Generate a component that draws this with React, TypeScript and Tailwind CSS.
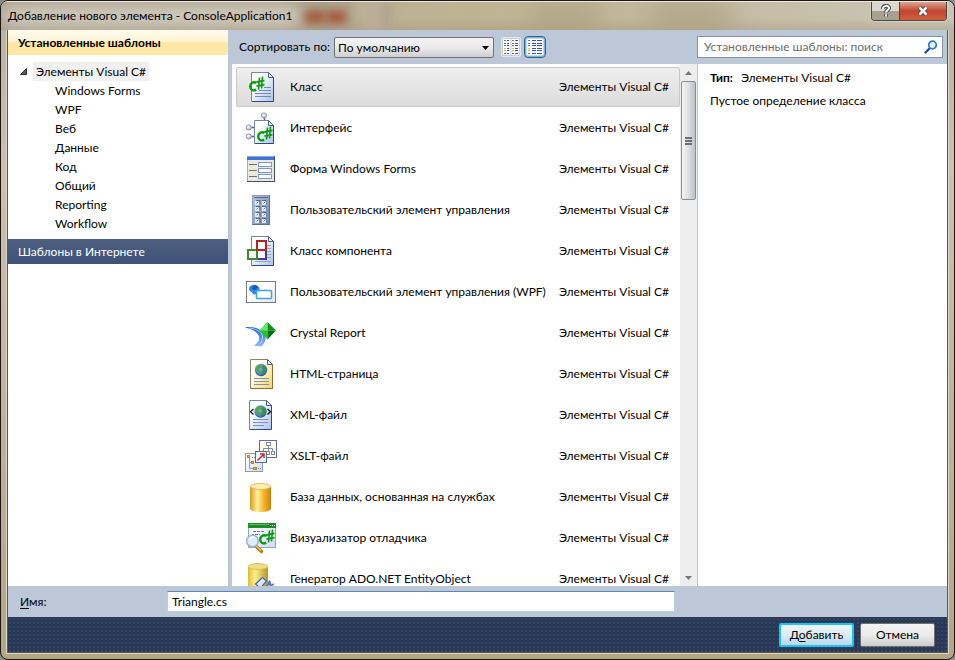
import React from 'react';

interface TemplateItem {
    name: string;
    icon: React.ReactNode;
}

const CATEGORIES = ['Windows Forms', 'WPF', 'Веб', 'Данные', 'Код', 'Общий', 'Reporting', 'Workflow'];

const GROUP_NAME = 'Элементы Visual C#';

const Icon: React.FC<{ children: React.ReactNode }> = ({ children }) => (
    <svg viewBox="0 0 32 32" className="h-8 w-8 shrink-0" aria-hidden="true">
        {children}
    </svg>
);

const Page: React.FC<{ x: number; y: number; w: number; h: number; fill?: string; stroke?: string; shade?: string }> = ({
    x,
    y,
    w,
    h,
    fill = 'url(#paper)',
    stroke = '#6f86ab',
    shade = '#304a7c',
}) => (
    <g>
        <path d={`M${x + 0.5} ${y + 0.5}h${w - 6}l5 5v${h - 6}h-${w - 1}z`} fill={fill} stroke={stroke} />
        <path d={`M${x + w - 5.5} ${y + 0.5}v5h5z`} fill="#dfe9f8" stroke="#4c5f7d" />
        <path d={`M${x + 1} ${y + h - 0.5}h${w - 1.5}v-${h - 6}`} fill="none" stroke={shade} />
    </g>
);

const Sharp: React.FC<{ x: number; y: number }> = ({ x, y }) => (
    <g fill="none" stroke="#0c9a0c">
        <path d={`M${x + 7.5} ${y + 2}c-3-2-6.3.3-6.300 3.600s3 4.700 6 3`} strokeWidth="2.4" />
        <path d={`M${x + 9.5} ${y + 8.5}l1-12M${x + 12.5} ${y + 7.5}l1-12`} strokeWidth="1.6" />
        <path d={`M${x + 7.5} ${y + 1}l8-1.6M${x + 7.5} ${y + 5.2}l8-1.6`} strokeWidth="1.8" />
    </g>
);

const Globe: React.FC<{ cx: number; cy: number }> = ({ cx, cy }) => (
    <g>
        <circle cx={cx} cy={cy} r="6.2" fill="url(#ocean)" />
        <path d={`M${cx - 4} ${cy - 4}l3-1.6 2 .8-.6 2.4-2.2 1.4.4 2 2 .8-1 3.4-1.6-.6-1-3-2.6-2z`} fill="#52a746" />
        <path d={`M${cx + 2} ${cy - 4.6}l2.4 1.4 1.2 3.2-1.4 3-2 1-.8-3 .8-1.6-1.6-1.4z`} fill="#3f9340" />
    </g>
);

const IconDefs: React.FC = () => (
    <svg className="absolute h-0 w-0" aria-hidden="true">
        <defs>
            <linearGradient id="paper" x1="0" y1="0" x2="1" y2="1">
                <stop offset="0.3" stopColor="#fdfeff" />
                <stop offset="1" stopColor="#a9c3ee" />
            </linearGradient>
            <linearGradient id="paperYellow" x1="0" y1="0" x2="1" y2="1">
                <stop offset="0.3" stopColor="#fffef4" />
                <stop offset="1" stopColor="#f6d668" />
            </linearGradient>
            <linearGradient id="steel" x1="0" y1="0" x2="1" y2="1">
                <stop offset="0" stopColor="#b5c4dc" />
                <stop offset="1" stopColor="#7288ad" />
            </linearGradient>
            <linearGradient id="gold" x1="0" x2="1">
                <stop offset="0" stopColor="#d99a1c" />
                <stop offset="0.35" stopColor="#fff0a0" />
                <stop offset="0.65" stopColor="#f7b52c" />
                <stop offset="1" stopColor="#c9820d" />
            </linearGradient>
            <linearGradient id="brass" x1="0" x2="1">
                <stop offset="0" stopColor="#d9bd36" />
                <stop offset="0.35" stopColor="#fff08c" />
                <stop offset="1" stopColor="#b89425" />
            </linearGradient>
            <linearGradient id="swoosh" x1="0" y1="0" x2="0" y2="1">
                <stop offset="0" stopColor="#1d5ecb" />
                <stop offset="1" stopColor="#8cbcff" />
            </linearGradient>
            <radialGradient id="ocean" cx="0.35" cy="0.3" r="0.8">
                <stop offset="0" stopColor="#8fc2ff" />
                <stop offset="1" stopColor="#184a9c" />
            </radialGradient>
            <radialGradient id="ball" cx="0.4" cy="0.35" r="0.7">
                <stop offset="0" stopColor="#ffffff" />
                <stop offset="1" stopColor="#9fb0c8" />
            </radialGradient>
            <linearGradient id="window" x1="0" y1="0" x2="1" y2="1">
                <stop offset="0.2" stopColor="#ffffff" />
                <stop offset="1" stopColor="#c9d9f2" />
            </linearGradient>
            <linearGradient id="pane" x1="0" y1="0" x2="1" y2="1">
                <stop offset="0.4" stopColor="#ffffff" />
                <stop offset="1" stopColor="#e2e4e8" />
            </linearGradient>
        </defs>
    </svg>
);

const TEMPLATES: TemplateItem[] = [
    {
        name: 'Класс',
        icon: (
            <Icon>
                <Page x={6} y={1} w={23} h={30} />
                <path d="M19 16.5h7M14 19.5h12M10 22.5h16M10 25.5h16" stroke="#7288ad" />
                <Sharp x={4} y={10} />
            </Icon>
        ),
    },
    {
        name: 'Интерфейс',
        icon: (
            <Icon>
                <path d="M19.5 5v4M6 15.5h4M6 24.5h4" stroke="#54657f" strokeWidth="1.5" />
                <Page x={9} y={8} w={20} h={24} />
                <circle cx="19" cy="3.5" r="2.6" fill="url(#ball)" stroke="#8b9ab3" />
                <circle cx="3.8" cy="15.5" r="2.6" fill="url(#ball)" stroke="#8b9ab3" />
                <circle cx="3.8" cy="24.5" r="2.6" fill="url(#ball)" stroke="#8b9ab3" />
                <Sharp x={12} y={19} />
            </Icon>
        ),
    },
    {
        name: 'Форма Windows Forms',
        icon: (
            <Icon>
                <rect x="2.5" y="3.5" width="27" height="25" fill="#ece9d8" stroke="#a3abbb" />
                <rect x="2" y="3" width="28" height="4" fill="#3f74d8" />
                <path d="M2 3.5h27" stroke="#84a9ee" />
                <path d="M29.5 4v25M2 28.5h28" stroke="#3c4d6d" />
                <path d="M4 11.5h8M4 17.5h8M4 23.5h8" stroke="#66718a" />
                <g fill="#ffffff" stroke="#7898d2">
                    <rect x="13.5" y="9.5" width="13" height="4" />
                    <rect x="13.5" y="15.5" width="13" height="4" />
                    <rect x="13.5" y="21.5" width="13" height="4" />
                </g>
            </Icon>
        ),
    },
    {
        name: 'Пользовательский элемент управления',
        icon: (
            <Icon>
                <rect x="7.5" y="1.5" width="17" height="29" fill="url(#steel)" stroke="#8a9dbc" />
                <path d="M24.5 1v30M7 30.5h18" stroke="#5a6f92" />
                <path d="M9 3.5h14" stroke="#4d648b" />
                {[6, 12, 18, 24].map((y) => (
                    <g key={y}>
                        <path d={`M11 ${y + 0.5}h4v4M17 ${y + 0.5}h4v4`} fill="none" stroke="#566a8c" />
                        <rect x="10" y={y + 1} width="4" height="4" fill="#e6edf7" />
                        <rect x="17" y={y + 1} width="4" height="4" fill="#e6edf7" />
                        <path d={`M11.500 ${y + 3.5}l2-2M18.500 ${y + 3.5}l2-2`} stroke="#6a7d9d" />
                    </g>
                ))}
            </Icon>
        ),
    },
    {
        name: 'Класс компонента',
        icon: (
            <Icon>
                <Page x={6} y={1} w={23} h={30} />
                <path d="M22 10.5h4M22 13.5h4M22 16.5h4M22 19.5h4M22 22.5h4M10 26.5h16" stroke="#92a5c8" />
                <rect x="12" y="15" width="9" height="9" fill="#ffffff" stroke="#45388f" strokeWidth="2" />
                <rect x="3" y="15" width="9" height="9" fill="#ffffff" stroke="#3c8a28" strokeWidth="2" />
                <rect x="12" y="6" width="9" height="9" fill="#ffffff" stroke="#b92222" strokeWidth="2" />
            </Icon>
        ),
    },
    {
        name: 'Пользовательский элемент управления (WPF)',
        icon: (
            <Icon>
                <rect x="1.5" y="5.5" width="29" height="21" fill="url(#pane)" stroke="#777c86" />
                <path d="M4 12c1-3 5-4 8-2.500 3 1.500 3.500 5 1 7.500-3 2.500-6 1.500-6-1-2-.500-3.500-2-3-4z" fill="#2f8ae0" />
                <path d="M8 10c2-1 4-.500 5 1l-3 3-3-1z" fill="#1555b4" />
                <rect x="11.5" y="14.5" width="15" height="8" rx="1" fill="#ffffff" stroke="#35a8d8" strokeWidth="1.500" />
            </Icon>
        ),
    },
    {
        name: 'Crystal Report',
        icon: (
            <Icon>
                <path d="M0 10.500c7-1.500 19 1 20.500 10 .4 3-1.500 6.500-4 8.800-2.600.4-5.500-.1-7.500-.8 5-3 6.500-7 4-11C10.500 13 5 12 0 10.500z" fill="url(#swoosh)" />
                <path d="M4 11c6 .5 12 3 13.500 8 .5 3-1 6-3 8.500" fill="none" stroke="#b9d6ff" />
                <path d="M22.500 5v17.500l-8-9z" fill="#25c42d" />
                <path d="M22.500 5l8.500 8.500h-8.500z" fill="#12901b" />
                <path d="M22.500 22.500l8.500-9h-8.500z" fill="#067010" />
                <path d="M22.500 5l-8 8.500h8z" fill="#6ee468" />
            </Icon>
        ),
    },
    {
        name: 'HTML-страница',
        icon: (
            <Icon>
                <Page x={5} y={1} w={23} h={30} fill="url(#paperYellow)" stroke="#8b8468" shade="#8a6d20" />
                <Globe cx={16} cy={12} />
                <path d="M9 20.500h15M9 23.500h15M9 26.500h15" stroke="#8792a8" />
            </Icon>
        ),
    },
    {
        name: 'XML-файл',
        icon: (
            <Icon>
                <Page x={4} y={1} w={23} h={30} />
                <Globe cx={15.5} cy={12.5} />
                <path d="M8.500 10l-3 2.700 3 2.700M22.500 10l3 2.700-3 2.700" fill="none" stroke="#111111" strokeWidth="1.300" />
                <path d="M8 20.500h15M8 23.500h15M8 26.500h11" stroke="#7f90b0" />
            </Icon>
        ),
    },
    {
        name: 'XSLT-файл',
        icon: (
            <Icon>
                <rect x="14.500" y="0.500" width="17" height="17" fill="#fffbe6" stroke="#5f7192" />
                <path d="M23.500 5v3M18.500 11v-2.500h9V11M23.500 8v3" fill="none" stroke="#7d8ba4" />
                <g fill="#ffffff" stroke="#7d8ba4">
                    <rect x="21.500" y="2.500" width="4" height="3" />
                    <rect x="16.500" y="11.500" width="3" height="3" />
                    <rect x="21.500" y="11.500" width="3" height="3" />
                    <rect x="26.500" y="11.500" width="3" height="3" />
                </g>
                <rect x="0.500" y="13.500" width="17" height="18" fill="url(#window)" stroke="#8f9bb2" />
                <path d="M4.500 18v10.500H8M4.500 22.500H8" fill="none" stroke="#8f9bb2" />
                <path d="M7 17.500h4M12 22.500h3M13 28.500h3" stroke="#7d8ba4" strokeDasharray="1 1" />
                <g fill="#f0b428" stroke="#b98416">
                    <rect x="2.500" y="15.500" width="2" height="2" />
                    <rect x="6.500" y="21.500" width="2" height="2" />
                    <rect x="8.500" y="27.500" width="3" height="2" />
                </g>
                <rect x="10.500" y="11.500" width="11" height="11" fill="#eef4ff" stroke="#56688a" />
                <path d="M12.500 20.500l6-6M15 14h4v4" fill="none" stroke="#c0302a" strokeWidth="1.500" />
            </Icon>
        ),
    },
    {
        name: 'База данных, основанная на службах',
        icon: (
            <Icon>
                <path d="M5 5.500v22c0 2 4.500 3.500 10.500 3.500S26 29.500 26 27.500v-22z" fill="url(#gold)" />
                <ellipse cx="15.500" cy="5.500" rx="10.200" ry="3" fill="#ffefb0" stroke="#e0ab3c" strokeWidth="0.800" />
            </Icon>
        ),
    },
    {
        name: 'Визуализатор отладчика',
        icon: (
            <Icon>
                <rect x="3.500" y="1.500" width="27" height="24" fill="url(#window)" stroke="#8ea6cc" />
                <rect x="3" y="1" width="28" height="5" fill="#1f8a28" />
                <path d="M4 2.500h20" stroke="#5cbd5c" />
                <path d="M25 3.500h1M27 3.500h1M29 3.500h1" stroke="#ffffff" />
                <path d="M8 9.500h11M7 12.500h2M10 12.500h5" stroke="#4f7cc4" strokeDasharray="3 1" />
                <Sharp x={14} y={12} />
                <path d="M11 24l5.500 5.500" stroke="#b97716" strokeWidth="3.400" strokeLinecap="round" />
                <path d="M11 23.500l5 5" stroke="#f5c55a" strokeWidth="1.200" />
                <circle cx="7.500" cy="19" r="5.800" fill="#dcecfb" fillOpacity="0.950" stroke="#a3b3ca" strokeWidth="1.500" />
                <path d="M4.500 17.500c1-2 3-2.500 4.500-2" fill="none" stroke="#ffffff" strokeWidth="1.500" />
            </Icon>
        ),
    },
    {
        name: 'Генератор ADO.NET EntityObject',
        icon: (
            <Icon>
                <path d="M3 4v24c0 2 4 4 10 4s10-2 10-4V4z" fill="url(#brass)" />
                <ellipse cx="13" cy="3.500" rx="9.800" ry="3" fill="#eddf83" stroke="#d3b94e" strokeWidth="0.800" />
                <path d="M10.500 21l7-6.500 4 3.500-6 7z" fill="#dbe9fd" stroke="#4565a7" strokeWidth="1.200" />
                <path d="M20 24l6-4.500M25 17.500l-1.500 3 2.500 2 3-1.500" fill="none" stroke="#5a78b4" strokeWidth="1.800" />
            </Icon>
        ),
    },
];

const MARK_COLORS = ['#4f9a50', '#e03c31', '#3d6ae0', '#d8c92c', '#8ac43c', '#e03c31'];

const ViewIcon: React.FC<{ medium?: boolean }> = ({ medium }) => (
    <svg viewBox="0 0 16 16" className="h-4 w-4" aria-hidden="true">
        <rect width="16" height="16" fill="#ffffff" />
        {!medium && <path d="M8 0v16" stroke="#c3cddd" strokeWidth="1" />}
        {MARK_COLORS.map((color, i) => (
            <g key={color + i} shapeRendering="crispEdges">
                <rect x="1" y={1 + i * 2.5} width="2" height="1" fill={color} />
                {medium ? (
                    <>
                        <rect x="5" y={1 + i * 2.5} width="4" height="1" fill="#3a50c4" />
                        <rect x="10" y={1 + i * 2.5} width="5" height="1" fill="#3a50c4" />
                    </>
                ) : (
                    <>
                        <rect x="4" y={1 + i * 2.5} width="2" height="1" fill="#3a50c4" />
                        <rect x="9" y={1 + i * 2.5} width="2" height="1" fill={color} />
                        <rect x="12" y={1 + i * 2.5} width="3" height="1" fill="#3a50c4" />
                    </>
                )}
            </g>
        ))}
    </svg>
);

const TitleBar: React.FC = () => (
    <header className="relative flex h-[29px] shrink-0 items-start justify-between overflow-hidden rounded-t-md border-t border-[#efe9e2] bg-linear-to-r from-[#b3a999] from-0% via-[#beb391] via-50% to-[#cbc5b5] pl-[7px] pr-[7px]">
        {/* blurred desktop behind the glass */}
        <div className="absolute inset-x-0 bottom-0 h-3 bg-linear-to-b from-transparent to-[#a0977c]/40" />
        <div className="absolute -left-2 -top-2 h-9 w-[360px] bg-[#a69b88]/70 blur-xs" />
        <div className="absolute left-[364px] top-0 h-full w-7 bg-[#bbae98] blur-xs" />
        <div className="absolute left-[384px] top-0 h-full w-1 bg-[#948b74]/60 blur-xs" />
        <div className="absolute left-[530px] top-1 h-5 w-[70px] bg-[#a09370]/60 blur-md" />
        <div className="absolute left-[650px] top-1 h-5 w-[80px] bg-[#a09370]/70 blur-md" />
        <div className="absolute left-0 top-1 h-5 w-[300px] rounded-full bg-[#e4e1d9]/70 blur-sm" />
        <div className="absolute left-[304px] top-[9px] h-3 w-5 bg-[#a4583a] blur-xs" />
        <div className="absolute left-[325px] top-[9px] h-3 w-5 bg-[#a4583a] blur-xs" />
        <h1 className="relative pt-1 text-[12px] leading-5 text-black">Добавление нового элемента - ConsoleApplication1</h1>
        <div className="relative flex h-[19px] overflow-hidden rounded-b border border-t-0 border-[#4c463e] shadow-[0_0_0_1px_#d8d2c4]">
            <button type="button" aria-label="Справка" className="flex w-7 items-center justify-center border-r border-[#4c463e] bg-linear-to-b from-[#dcd8ce] from-50% to-[#a8a190] to-50%">
                <svg viewBox="0 0 12 14" className="h-[14px] w-3" aria-hidden="true">
                    <path d="M3 5c0-4 6-4 6-1 0 2-3 2-3 4.500M6 10.500v2" fill="none" stroke="#44444f" strokeWidth="4" />
                    <path d="M3 5c0-4 6-4 6-1 0 2-3 2-3 4.500M6 10.500v2" fill="none" stroke="#ffffff" strokeWidth="2" />
                </svg>
            </button>
            <button type="button" aria-label="Закрыть" className="flex w-[46px] items-center justify-center bg-linear-to-b from-[#dca493] via-[#c0452c] via-50% to-[#d0603f]">
                <svg viewBox="0 0 14 12" className="h-3 w-[14px]" aria-hidden="true">
                    <path d="M3.500 2.500l7 7M10.500 2.500l-7 7" stroke="#4a3a40" strokeWidth="4.500" />
                    <path d="M3.500 2.500l7 7M10.500 2.500l-7 7" stroke="#ffffff" strokeWidth="2.600" />
                </svg>
            </button>
        </div>
    </header>
);

const Sidebar: React.FC = () => (
    <aside className="w-[220px] shrink-0 bg-white">
        <h2 className="h-[25px] bg-linear-to-b from-[#fffbef] from-0% via-[#fff3d0] via-50% to-[#ffe8a6] to-50% pl-[10px] text-[12px] font-bold leading-[25px]">
            Установленные шаблоны
        </h2>
        <nav className="pb-[6px] pt-[7px] text-[12px] leading-[19px]">
            <div className="flex items-center pl-3">
                <svg viewBox="0 0 7 7" className="mr-[6px] h-[7px] w-[7px]" aria-hidden="true">
                    <path d="M6.500 0.500v6h-6z" fill="#595959" stroke="#262626" />
                </svg>
                <a href="#csharp" className="bg-[#f0f0f0] px-[3px]">{GROUP_NAME}</a>
            </div>
            <ul className="pl-[47px]">
                {CATEGORIES.map((category) => (
                    <li key={category}>
                        <a href="#category">{category}</a>
                    </li>
                ))}
            </ul>
        </nav>
        <h2 className="h-[25px] bg-linear-to-b from-[#4d6082] to-[#3d5277] pl-[10px] text-[12px] leading-[25px] text-white">
            Шаблоны в Интернете
        </h2>
    </aside>
);

const Toolbar: React.FC = () => (
    <div className="flex h-[34px] shrink-0 items-center pl-[7px] pr-1">
        <label htmlFor="sort" className="w-[95px] whitespace-nowrap">Сортировать по:</label>
        <div className="relative">
            <select
                id="sort"
                className="h-[21px] w-[160px] appearance-none rounded-xs border border-[#707070] bg-linear-to-b from-[#f2f2f2] via-[#ebebeb] via-50% to-[#cfcfcf] pl-[3px] text-[12px] leading-[19px] text-black"
            >
                <option>По умолчанию</option>
            </select>
            <svg viewBox="0 0 7 4" className="pointer-events-none absolute right-[5px] top-[9px] h-1 w-[7px]" aria-hidden="true">
                <path d="M0 0h7l-3.500 4z" fill="#000000" />
            </svg>
        </div>
        <button type="button" aria-label="Мелкие значки" className="ml-[7px] flex h-5 w-5 items-center justify-center rounded-xs border border-[#e3e8f0] bg-[#c3cddd]">
            <ViewIcon />
        </button>
        <button type="button" aria-label="Средние значки" className="ml-[3px] flex h-[22px] w-[22px] items-center justify-center rounded-sm border border-[#2c628b] bg-[#b5dff3] shadow-[inset_0_0_0_1px_#7fb4d4]">
            <ViewIcon medium />
        </button>
        <div className="ml-auto flex h-[22px] w-[246px] items-center border border-[#8593a8] bg-white pl-[6px] pr-1">
            <input
                type="text"
                aria-label="Поиск"
                placeholder="Установленные шаблоны: поиск"
                className="min-w-0 flex-1 text-[12px] outline-none placeholder:text-[#6d6d6d]"
            />
            <svg viewBox="0 0 14 14" className="h-[14px] w-[14px]" aria-hidden="true">
                <path d="M1.500 12.500l4.500-4.500" stroke="#1f4a9c" strokeWidth="2.400" strokeLinecap="round" />
                <circle cx="8.500" cy="5" r="3.800" fill="#eaf4ff" stroke="#2f7cd0" strokeWidth="1.800" />
            </svg>
        </div>
    </div>
);

const TemplateList: React.FC = () => (
    <ul className="flex min-w-0 flex-1 flex-col gap-px overflow-hidden pl-1 pt-[3px]">
        {TEMPLATES.map(({ name, icon }, index) => (
            <li key={name} className="shrink-0">
                <button
                    type="button"
                    className={`flex h-10 w-full items-center rounded-xs border pl-2 pr-[10px] text-left ${
                        index === 0 ? 'border-[#c9c9c9] bg-linear-to-b from-[#efefef] to-[#dcdcdc]' : 'border-transparent'
                    }`}
                >
                    {icon}
                    <span className="ml-[13px] min-w-0 flex-1 whitespace-nowrap">{name}</span>
                    <span className="whitespace-nowrap">{GROUP_NAME}</span>
                </button>
            </li>
        ))}
    </ul>
);

const ScrollBar: React.FC = () => (
    <div className="flex w-[17px] shrink-0 flex-col items-center bg-[#ededed]">
        <button type="button" aria-label="Вверх" className="flex h-[17px] w-full shrink-0 items-center justify-center">
            <svg viewBox="0 0 7 4" className="h-1 w-[7px]" aria-hidden="true">
                <path d="M0 4h7L3.500 0z" fill="#777777" />
            </svg>
        </button>
        <div className="flex h-[119px] w-[15px] items-center justify-center rounded-xs border border-[#8d8d8d] bg-linear-to-r from-[#f5f5f5] via-[#dedfe0] via-50% to-[#bfc1c4]">
            <div className="flex w-[7px] flex-col gap-px">
                <div className="h-[2px] bg-[#6f6f6f]" />
                <div className="h-[2px] bg-[#6f6f6f]" />
                <div className="h-[2px] bg-[#6f6f6f]" />
            </div>
        </div>
        <button type="button" aria-label="Вниз" className="mt-auto flex h-[17px] w-full shrink-0 items-center justify-center">
            <svg viewBox="0 0 7 4" className="h-1 w-[7px]" aria-hidden="true">
                <path d="M0 0h7L3.500 4z" fill="#777777" />
            </svg>
        </button>
    </div>
);

const Details: React.FC = () => (
    <section className="w-[250px] shrink-0 border-l border-[#bcc7d8] bg-white pl-3 pt-1 leading-[18px]">
        <p className="pt-px">
            <strong className="mr-2">Тип:</strong>
            {GROUP_NAME}
        </p>
        <p className="mt-[5px]">Пустое определение класса</p>
    </section>
);

const NameRow: React.FC = () => (
    <div className="flex h-[31px] shrink-0 items-center bg-[#bcc7d8] pl-3">
        <label htmlFor="name" className="w-[147px]">
            <span className="underline underline-offset-2">И</span>мя:
        </label>
        <input
            id="name"
            type="text"
            defaultValue="Triangle.cs"
            className="mr-[272px] h-[21px] min-w-0 flex-1 border border-[#b5cfe7] border-t-[#5b87b0] bg-white px-1 text-[12px] outline-none"
        />
    </div>
);

const Footer: React.FC = () => (
    <footer className="flex h-[35px] shrink-0 items-center justify-end gap-[6px] bg-[#293955] bg-[radial-gradient(#324666_1px,transparent_1px)] bg-[size:4px_4px] pr-3">
        <button type="button" className="h-6 w-[75px] rounded-xs border-2 border-[#1cc2f2] bg-linear-to-b from-[#eef6fb] via-[#dbebf4] via-50% to-[#b8d8ea]">
            Д<span className="underline underline-offset-2">о</span>бавить
        </button>
        <button type="button" className="h-6 w-[75px] rounded-xs border border-[#707070] bg-linear-to-b from-[#f3f3f3] via-[#ebebeb] via-50% to-[#cecece]">
            Отмена
        </button>
    </footer>
);

export default function App() {
    return (
        <div className="h-screen bg-[#8c8c8c] font-['Lato','Noto_Sans',sans-serif] text-[12px] text-black">
            <IconDefs />
            <div className="flex h-full flex-col overflow-hidden rounded-lg border border-[#1b1714] bg-linear-to-b from-[#b8b0a0] via-[#cfc0b0] via-25% to-[#b3a684]">
                <TitleBar />
                <div className="mx-[6px] mb-[6px] flex min-h-0 flex-1 flex-col border border-t-0 border-[#5d564a] shadow-[0_0_0_1px_#ddd6c8]">
                    <div className="flex min-h-0 flex-1 bg-[#bcc7d8]">
                        <Sidebar />
                        <main className="ml-1 flex min-w-0 flex-1 flex-col">
                            <Toolbar />
                            <div className="flex min-h-0 flex-1 bg-white">
                                <TemplateList />
                                <ScrollBar />
                                <Details />
                            </div>
                        </main>
                    </div>
                    <NameRow />
                    <Footer />
                </div>
            </div>
        </div>
    );
}
